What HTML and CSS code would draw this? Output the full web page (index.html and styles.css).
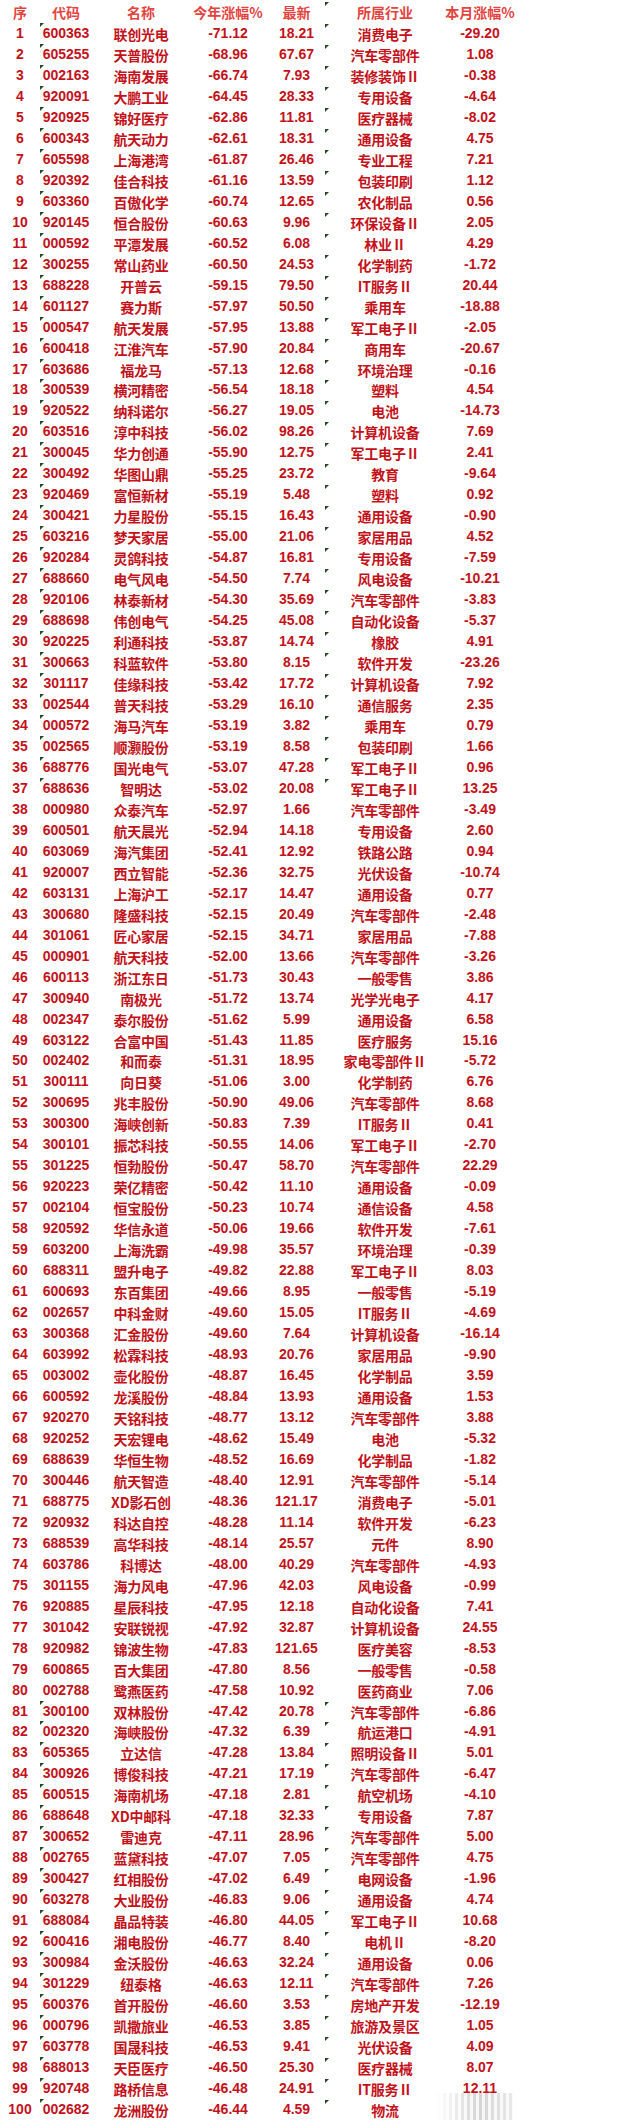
FILE: index.html
```html
<!DOCTYPE html>
<html lang="zh">
<head>
<meta charset="utf-8">
<title>今年跌幅榜</title>
<link rel="stylesheet" href="styles.css">
</head>
<body>
<div class="sheet">
<div class="r h th"><span>序</span><span>代码</span><span>名称</span><span>今年涨幅%</span><span>最新</span><span>所属行业</span><span>本月涨幅%</span></div>
<div class="r t"><span>1</span><span>600363</span><span class="c">联创光电</span><span>-71.12</span><span>18.21</span><span class="c">消费电子</span><span>-29.20</span></div>
<div class="r t"><span>2</span><span>605255</span><span class="c">天普股份</span><span>-68.96</span><span>67.67</span><span class="c">汽车零部件</span><span>1.08</span></div>
<div class="r t"><span>3</span><span>002163</span><span class="c">海南发展</span><span>-66.74</span><span>7.93</span><span class="c">装修装饰Ⅱ</span><span>-0.38</span></div>
<div class="r t"><span>4</span><span>920091</span><span class="c">大鹏工业</span><span>-64.45</span><span>28.33</span><span class="c">专用设备</span><span>-4.64</span></div>
<div class="r t"><span>5</span><span>920925</span><span class="c">锦好医疗</span><span>-62.86</span><span>11.81</span><span class="c">医疗器械</span><span>-8.02</span></div>
<div class="r t"><span>6</span><span>600343</span><span class="c">航天动力</span><span>-62.61</span><span>18.31</span><span class="c">通用设备</span><span>4.75</span></div>
<div class="r t"><span>7</span><span>605598</span><span class="c">上海港湾</span><span>-61.87</span><span>26.46</span><span class="c">专业工程</span><span>7.21</span></div>
<div class="r t"><span>8</span><span>920392</span><span class="c">佳合科技</span><span>-61.16</span><span>13.59</span><span class="c">包装印刷</span><span>1.12</span></div>
<div class="r t"><span>9</span><span>603360</span><span class="c">百傲化学</span><span>-60.74</span><span>12.65</span><span class="c">农化制品</span><span>0.56</span></div>
<div class="r t"><span>10</span><span>920145</span><span class="c">恒合股份</span><span>-60.63</span><span>9.96</span><span class="c">环保设备Ⅱ</span><span>2.05</span></div>
<div class="r t"><span>11</span><span>000592</span><span class="c">平潭发展</span><span>-60.52</span><span>6.08</span><span class="c">林业Ⅱ</span><span>4.29</span></div>
<div class="r t"><span>12</span><span>300255</span><span class="c">常山药业</span><span>-60.50</span><span>24.53</span><span class="c">化学制药</span><span>-1.72</span></div>
<div class="r t"><span>13</span><span>688228</span><span class="c">开普云</span><span>-59.15</span><span>79.50</span><span class="c">IT服务Ⅱ</span><span>20.44</span></div>
<div class="r t"><span>14</span><span>601127</span><span class="c">赛力斯</span><span>-57.97</span><span>50.50</span><span class="c">乘用车</span><span>-18.88</span></div>
<div class="r t"><span>15</span><span>000547</span><span class="c">航天发展</span><span>-57.95</span><span>13.88</span><span class="c">军工电子Ⅱ</span><span>-2.05</span></div>
<div class="r t"><span>16</span><span>600418</span><span class="c">江淮汽车</span><span>-57.90</span><span>20.84</span><span class="c">商用车</span><span>-20.67</span></div>
<div class="r t"><span>17</span><span>603686</span><span class="c">福龙马</span><span>-57.13</span><span>12.68</span><span class="c">环境治理</span><span>-0.16</span></div>
<div class="r t"><span>18</span><span>300539</span><span class="c">横河精密</span><span>-56.54</span><span>18.18</span><span class="c">塑料</span><span>4.54</span></div>
<div class="r t"><span>19</span><span>920522</span><span class="c">纳科诺尔</span><span>-56.27</span><span>19.05</span><span class="c">电池</span><span>-14.73</span></div>
<div class="r t"><span>20</span><span>603516</span><span class="c">淳中科技</span><span>-56.02</span><span>98.26</span><span class="c">计算机设备</span><span>7.69</span></div>
<div class="r t"><span>21</span><span>300045</span><span class="c">华力创通</span><span>-55.90</span><span>12.75</span><span class="c">军工电子Ⅱ</span><span>2.41</span></div>
<div class="r t"><span>22</span><span>300492</span><span class="c">华图山鼎</span><span>-55.25</span><span>23.72</span><span class="c">教育</span><span>-9.64</span></div>
<div class="r t"><span>23</span><span>920469</span><span class="c">富恒新材</span><span>-55.19</span><span>5.48</span><span class="c">塑料</span><span>0.92</span></div>
<div class="r t"><span>24</span><span>300421</span><span class="c">力星股份</span><span>-55.15</span><span>16.43</span><span class="c">通用设备</span><span>-0.90</span></div>
<div class="r t"><span>25</span><span>603216</span><span class="c">梦天家居</span><span>-55.00</span><span>21.06</span><span class="c">家居用品</span><span>4.52</span></div>
<div class="r t"><span>26</span><span>920284</span><span class="c">灵鸽科技</span><span>-54.87</span><span>16.81</span><span class="c">专用设备</span><span>-7.59</span></div>
<div class="r t"><span>27</span><span>688660</span><span class="c">电气风电</span><span>-54.50</span><span>7.74</span><span class="c">风电设备</span><span>-10.21</span></div>
<div class="r t"><span>28</span><span>920106</span><span class="c">林泰新材</span><span>-54.30</span><span>35.69</span><span class="c">汽车零部件</span><span>-3.83</span></div>
<div class="r t"><span>29</span><span>688698</span><span class="c">伟创电气</span><span>-54.25</span><span>45.08</span><span class="c">自动化设备</span><span>-5.37</span></div>
<div class="r t"><span>30</span><span>920225</span><span class="c">利通科技</span><span>-53.87</span><span>14.74</span><span class="c">橡胶</span><span>4.91</span></div>
<div class="r t"><span>31</span><span>300663</span><span class="c">科蓝软件</span><span>-53.80</span><span>8.15</span><span class="c">软件开发</span><span>-23.26</span></div>
<div class="r t"><span>32</span><span>301117</span><span class="c">佳缘科技</span><span>-53.42</span><span>17.72</span><span class="c">计算机设备</span><span>7.92</span></div>
<div class="r t"><span>33</span><span>002544</span><span class="c">普天科技</span><span>-53.29</span><span>16.10</span><span class="c">通信服务</span><span>2.35</span></div>
<div class="r t"><span>34</span><span>000572</span><span class="c">海马汽车</span><span>-53.19</span><span>3.82</span><span class="c">乘用车</span><span>0.79</span></div>
<div class="r t"><span>35</span><span>002565</span><span class="c">顺灏股份</span><span>-53.19</span><span>8.58</span><span class="c">包装印刷</span><span>1.66</span></div>
<div class="r t"><span>36</span><span>688776</span><span class="c">国光电气</span><span>-53.07</span><span>47.28</span><span class="c">军工电子Ⅱ</span><span>0.96</span></div>
<div class="r t"><span>37</span><span>688636</span><span class="c">智明达</span><span>-53.02</span><span>20.08</span><span class="c">军工电子Ⅱ</span><span>13.25</span></div>
<div class="r"><span>38</span><span>000980</span><span class="c">众泰汽车</span><span>-52.97</span><span>1.66</span><span class="c">汽车零部件</span><span>-3.49</span></div>
<div class="r"><span>39</span><span>600501</span><span class="c">航天晨光</span><span>-52.94</span><span>14.18</span><span class="c">专用设备</span><span>2.60</span></div>
<div class="r"><span>40</span><span>603069</span><span class="c">海汽集团</span><span>-52.41</span><span>12.92</span><span class="c">铁路公路</span><span>0.94</span></div>
<div class="r"><span>41</span><span>920007</span><span class="c">西立智能</span><span>-52.36</span><span>32.75</span><span class="c">光伏设备</span><span>-10.74</span></div>
<div class="r"><span>42</span><span>603131</span><span class="c">上海沪工</span><span>-52.17</span><span>14.47</span><span class="c">通用设备</span><span>0.77</span></div>
<div class="r"><span>43</span><span>300680</span><span class="c">隆盛科技</span><span>-52.15</span><span>20.49</span><span class="c">汽车零部件</span><span>-2.48</span></div>
<div class="r"><span>44</span><span>301061</span><span class="c">匠心家居</span><span>-52.15</span><span>34.71</span><span class="c">家居用品</span><span>-7.88</span></div>
<div class="r"><span>45</span><span>000901</span><span class="c">航天科技</span><span>-52.00</span><span>13.66</span><span class="c">汽车零部件</span><span>-3.26</span></div>
<div class="r"><span>46</span><span>600113</span><span class="c">浙江东日</span><span>-51.73</span><span>30.43</span><span class="c">一般零售</span><span>3.86</span></div>
<div class="r"><span>47</span><span>300940</span><span class="c">南极光</span><span>-51.72</span><span>13.74</span><span class="c">光学光电子</span><span>4.17</span></div>
<div class="r"><span>48</span><span>002347</span><span class="c">泰尔股份</span><span>-51.62</span><span>5.99</span><span class="c">通用设备</span><span>6.58</span></div>
<div class="r"><span>49</span><span>603122</span><span class="c">合富中国</span><span>-51.43</span><span>11.85</span><span class="c">医疗服务</span><span>15.16</span></div>
<div class="r"><span>50</span><span>002402</span><span class="c">和而泰</span><span>-51.31</span><span>18.95</span><span class="c">家电零部件Ⅱ</span><span>-5.72</span></div>
<div class="r"><span>51</span><span>300111</span><span class="c">向日葵</span><span>-51.06</span><span>3.00</span><span class="c">化学制药</span><span>6.76</span></div>
<div class="r"><span>52</span><span>300695</span><span class="c">兆丰股份</span><span>-50.90</span><span>49.06</span><span class="c">汽车零部件</span><span>8.68</span></div>
<div class="r"><span>53</span><span>300300</span><span class="c">海峡创新</span><span>-50.83</span><span>7.39</span><span class="c">IT服务Ⅱ</span><span>0.41</span></div>
<div class="r"><span>54</span><span>300101</span><span class="c">振芯科技</span><span>-50.55</span><span>14.06</span><span class="c">军工电子Ⅱ</span><span>-2.70</span></div>
<div class="r"><span>55</span><span>301225</span><span class="c">恒勃股份</span><span>-50.47</span><span>58.70</span><span class="c">汽车零部件</span><span>22.29</span></div>
<div class="r"><span>56</span><span>920223</span><span class="c">荣亿精密</span><span>-50.42</span><span>11.10</span><span class="c">通用设备</span><span>-0.09</span></div>
<div class="r"><span>57</span><span>002104</span><span class="c">恒宝股份</span><span>-50.23</span><span>10.74</span><span class="c">通信设备</span><span>4.58</span></div>
<div class="r"><span>58</span><span>920592</span><span class="c">华信永道</span><span>-50.06</span><span>19.66</span><span class="c">软件开发</span><span>-7.61</span></div>
<div class="r"><span>59</span><span>603200</span><span class="c">上海洗霸</span><span>-49.98</span><span>35.57</span><span class="c">环境治理</span><span>-0.39</span></div>
<div class="r"><span>60</span><span>688311</span><span class="c">盟升电子</span><span>-49.82</span><span>22.88</span><span class="c">军工电子Ⅱ</span><span>8.03</span></div>
<div class="r"><span>61</span><span>600693</span><span class="c">东百集团</span><span>-49.66</span><span>8.95</span><span class="c">一般零售</span><span>-5.19</span></div>
<div class="r"><span>62</span><span>002657</span><span class="c">中科金财</span><span>-49.60</span><span>15.05</span><span class="c">IT服务Ⅱ</span><span>-4.69</span></div>
<div class="r"><span>63</span><span>300368</span><span class="c">汇金股份</span><span>-49.60</span><span>7.64</span><span class="c">计算机设备</span><span>-16.14</span></div>
<div class="r"><span>64</span><span>603992</span><span class="c">松霖科技</span><span>-48.93</span><span>20.76</span><span class="c">家居用品</span><span>-9.90</span></div>
<div class="r"><span>65</span><span>003002</span><span class="c">壶化股份</span><span>-48.87</span><span>16.45</span><span class="c">化学制品</span><span>3.59</span></div>
<div class="r"><span>66</span><span>600592</span><span class="c">龙溪股份</span><span>-48.84</span><span>13.93</span><span class="c">通用设备</span><span>1.53</span></div>
<div class="r"><span>67</span><span>920270</span><span class="c">天铭科技</span><span>-48.77</span><span>13.12</span><span class="c">汽车零部件</span><span>3.88</span></div>
<div class="r"><span>68</span><span>920252</span><span class="c">天宏锂电</span><span>-48.62</span><span>15.49</span><span class="c">电池</span><span>-5.32</span></div>
<div class="r"><span>69</span><span>688639</span><span class="c">华恒生物</span><span>-48.52</span><span>16.69</span><span class="c">化学制品</span><span>-1.82</span></div>
<div class="r"><span>70</span><span>300446</span><span class="c">航天智造</span><span>-48.40</span><span>12.91</span><span class="c">汽车零部件</span><span>-5.14</span></div>
<div class="r"><span>71</span><span>688775</span><span class="c">XD影石创</span><span>-48.36</span><span>121.17</span><span class="c">消费电子</span><span>-5.01</span></div>
<div class="r"><span>72</span><span>920932</span><span class="c">科达自控</span><span>-48.28</span><span>11.14</span><span class="c">软件开发</span><span>-6.23</span></div>
<div class="r"><span>73</span><span>688539</span><span class="c">高华科技</span><span>-48.14</span><span>25.57</span><span class="c">元件</span><span>8.90</span></div>
<div class="r"><span>74</span><span>603786</span><span class="c">科博达</span><span>-48.00</span><span>40.29</span><span class="c">汽车零部件</span><span>-4.93</span></div>
<div class="r"><span>75</span><span>301155</span><span class="c">海力风电</span><span>-47.96</span><span>42.03</span><span class="c">风电设备</span><span>-0.99</span></div>
<div class="r"><span>76</span><span>920885</span><span class="c">星辰科技</span><span>-47.95</span><span>12.18</span><span class="c">自动化设备</span><span>7.41</span></div>
<div class="r"><span>77</span><span>301042</span><span class="c">安联锐视</span><span>-47.92</span><span>32.87</span><span class="c">计算机设备</span><span>24.55</span></div>
<div class="r"><span>78</span><span>920982</span><span class="c">锦波生物</span><span>-47.83</span><span>121.65</span><span class="c">医疗美容</span><span>-8.53</span></div>
<div class="r"><span>79</span><span>600865</span><span class="c">百大集团</span><span>-47.80</span><span>8.56</span><span class="c">一般零售</span><span>-0.58</span></div>
<div class="r"><span>80</span><span>002788</span><span class="c">鹭燕医药</span><span>-47.58</span><span>10.92</span><span class="c">医药商业</span><span>7.06</span></div>
<div class="r t"><span>81</span><span>300100</span><span class="c">双林股份</span><span>-47.42</span><span>20.78</span><span class="c">汽车零部件</span><span>-6.86</span></div>
<div class="r t"><span>82</span><span>002320</span><span class="c">海峡股份</span><span>-47.32</span><span>6.39</span><span class="c">航运港口</span><span>-4.91</span></div>
<div class="r t"><span>83</span><span>605365</span><span class="c">立达信</span><span>-47.28</span><span>13.84</span><span class="c">照明设备Ⅱ</span><span>5.01</span></div>
<div class="r t"><span>84</span><span>300926</span><span class="c">博俊科技</span><span>-47.21</span><span>17.19</span><span class="c">汽车零部件</span><span>-6.47</span></div>
<div class="r t"><span>85</span><span>600515</span><span class="c">海南机场</span><span>-47.18</span><span>2.81</span><span class="c">航空机场</span><span>-4.10</span></div>
<div class="r t"><span>86</span><span>688648</span><span class="c">XD中邮科</span><span>-47.18</span><span>32.33</span><span class="c">专用设备</span><span>7.87</span></div>
<div class="r t"><span>87</span><span>300652</span><span class="c">雷迪克</span><span>-47.11</span><span>28.96</span><span class="c">汽车零部件</span><span>5.00</span></div>
<div class="r t"><span>88</span><span>002765</span><span class="c">蓝黛科技</span><span>-47.07</span><span>7.05</span><span class="c">汽车零部件</span><span>4.75</span></div>
<div class="r t"><span>89</span><span>300427</span><span class="c">红相股份</span><span>-47.02</span><span>6.49</span><span class="c">电网设备</span><span>-1.96</span></div>
<div class="r t"><span>90</span><span>603278</span><span class="c">大业股份</span><span>-46.83</span><span>9.06</span><span class="c">通用设备</span><span>4.74</span></div>
<div class="r t"><span>91</span><span>688084</span><span class="c">晶品特装</span><span>-46.80</span><span>44.05</span><span class="c">军工电子Ⅱ</span><span>10.68</span></div>
<div class="r t"><span>92</span><span>600416</span><span class="c">湘电股份</span><span>-46.77</span><span>8.40</span><span class="c">电机Ⅱ</span><span>-8.20</span></div>
<div class="r t"><span>93</span><span>300984</span><span class="c">金沃股份</span><span>-46.63</span><span>32.24</span><span class="c">通用设备</span><span>0.06</span></div>
<div class="r t"><span>94</span><span>301229</span><span class="c">纽泰格</span><span>-46.63</span><span>12.11</span><span class="c">汽车零部件</span><span>7.26</span></div>
<div class="r t"><span>95</span><span>600376</span><span class="c">首开股份</span><span>-46.60</span><span>3.53</span><span class="c">房地产开发</span><span>-12.19</span></div>
<div class="r t"><span>96</span><span>000796</span><span class="c">凯撒旅业</span><span>-46.53</span><span>3.85</span><span class="c">旅游及景区</span><span>1.05</span></div>
<div class="r t"><span>97</span><span>603778</span><span class="c">国晟科技</span><span>-46.53</span><span>9.41</span><span class="c">光伏设备</span><span>4.09</span></div>
<div class="r t"><span>98</span><span>688013</span><span class="c">天臣医疗</span><span>-46.50</span><span>25.30</span><span class="c">医疗器械</span><span>8.07</span></div>
<div class="r t"><span>99</span><span>920748</span><span class="c">路桥信息</span><span>-46.48</span><span>24.91</span><span class="c">IT服务Ⅱ</span><span>12.11</span></div>
<div class="r t last"><span>100</span><span>002682</span><span class="c">龙洲股份</span><span>-46.44</span><span>4.59</span><span class="c">物流</span><span class="wm"></span></div>
</div>
</body>
</html>
```
FILE: styles.css
```css
html, body {
  margin: 0;
  padding: 0;
  background: #ffffff;
}

.sheet {
  width: 624px;
  padding-top: 2px;
}

.r {
  display: grid;
  grid-template-columns: 40px 52px 98px 76px 61px 116px 74px;
  height: 20.97px;
  align-items: center;
  color: #c4121b;
  font-family: "Liberation Sans", "Noto Sans CJK SC", sans-serif;
  font-weight: bold;
  font-size: 14px;
  line-height: 20.97px;
}

.r span {
  position: relative;
  text-align: center;
  white-space: nowrap;
  height: 20.97px;
}

.r .c {
  font-family: "Noto Sans CJK SC", sans-serif;
  font-weight: bold;
  top: 1px;
  letter-spacing: -0.2px;
}

.h {
  height: 21px;
  color: #e4443f;
}

.h span {
  font-family: "Noto Sans CJK SC", sans-serif;
  font-weight: bold;
}

/* Excel "number stored as text" corner marks */
.t span:nth-child(2)::before,
.t span:nth-child(6)::before,
.th span:nth-child(6)::before {
  content: "";
  position: absolute;
  top: 0;
  width: 0;
  height: 0;
  border-top: 4px solid #234a23;
  border-right: 4px solid transparent;
}

.t span:nth-child(2)::before {
  left: 0;
}

.t span:nth-child(6)::before,
.th span:nth-child(6)::before {
  left: -2px;
}

.wm::after {
  content: "";
  position: absolute;
  left: -6px;
  top: -6px;
  width: 76px;
  height: 30px;
  background:
    linear-gradient(90deg, rgba(255,255,255,1) 0%, rgba(255,255,255,0.2) 55%, rgba(255,255,255,0.6) 100%),
    repeating-linear-gradient(90deg, #b8b8b8 0 3px, #f2f2f2 3px 6px);
  opacity: 0.75;
}
```
